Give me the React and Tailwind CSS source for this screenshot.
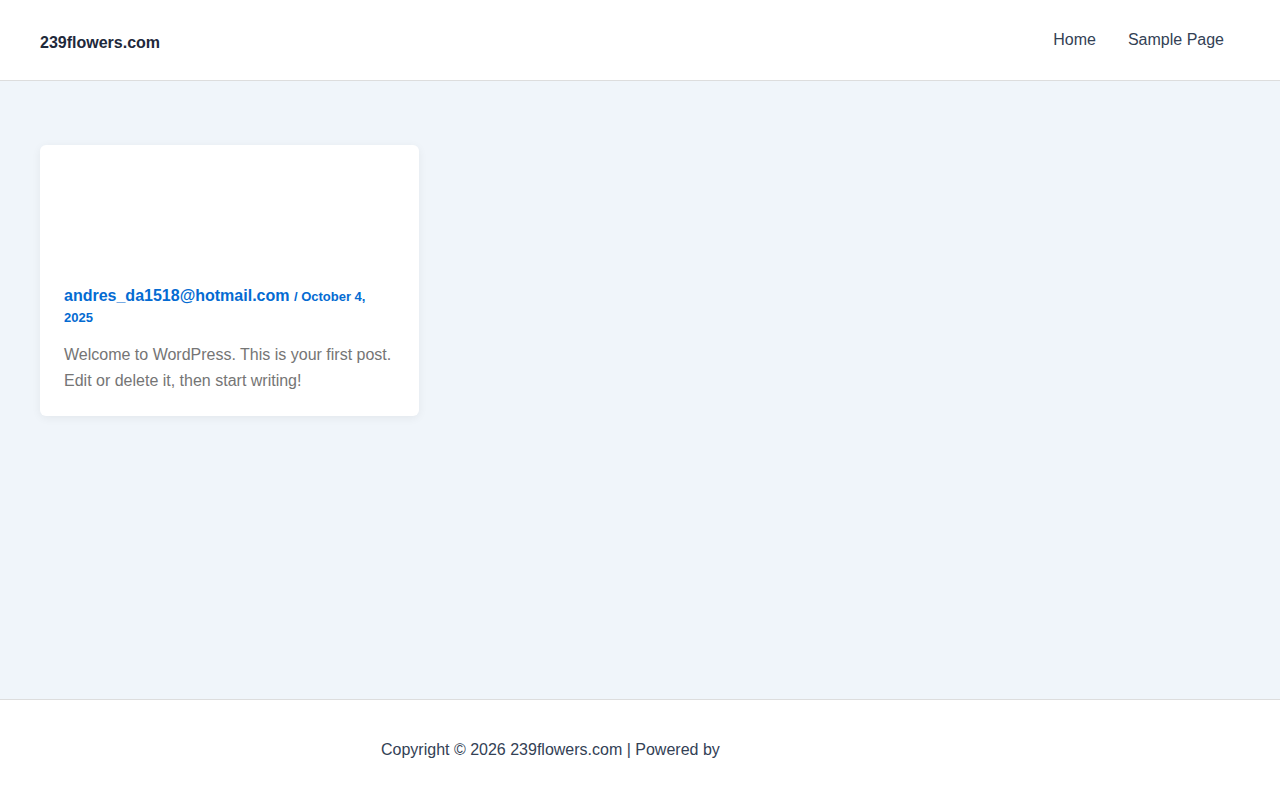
export default function App() {
  return (
    <div className="min-h-screen flex flex-col bg-[#f0f5fa]" style={{ fontFamily: '"Liberation Sans", Arial, sans-serif' }}>
      {/* Header */}
      <header className="h-[81px] bg-white border-b border-[#dddddd] flex items-center justify-between px-[40px]">
        <a className="text-[16px] font-bold text-[#1e293b] pt-[6px]">239flowers.com</a>
        <nav className="flex items-center pr-[16px]">
          <a className="px-[16px] text-[16px] text-[#334155]">Home</a>
          <a className="pl-[16px] text-[16px] text-[#334155]">Sample Page</a>
        </nav>
      </header>

      {/* Content */}
      <main className="flex-1 px-[40px] pt-[64px]">
        <article className="w-[379px] bg-white rounded-[6px] shadow-[0_2px_10px_rgba(0,0,0,0.06)] px-[24px] pt-[141px] pb-[22px]">
          <div className="leading-[20px] font-bold text-[#046bd2]">
            <span className="text-[16px]">andres_da1518@hotmail.com</span>{' '}
            <span className="text-[13px]">/ October 4, 2025</span>
          </div>
          <p className="mt-[14px] text-[16px] leading-[26px] text-[#757575]">
            Welcome to WordPress. This is your first post. Edit or delete it, then start writing!
          </p>
        </article>
      </main>

      {/* Footer */}
      <footer className="h-[101px] bg-white border-t border-[#dddddd] flex items-center pl-[381px]">
        <p className="text-[16px] text-[#334155]">Copyright © 2026 239flowers.com | Powered by</p>
      </footer>
    </div>
  )
}
